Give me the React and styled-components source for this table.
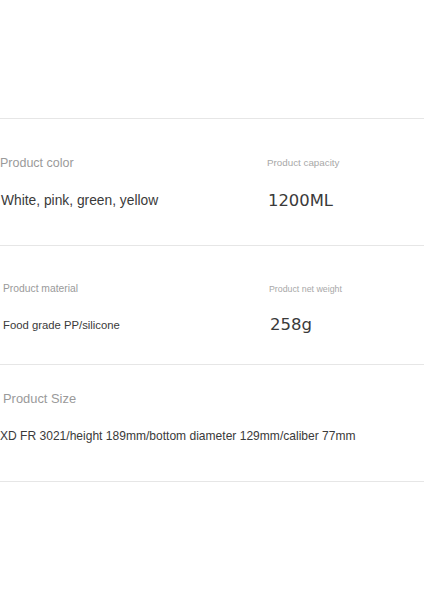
import React from "react";
import styled, { createGlobalStyle } from "styled-components";

const Global = createGlobalStyle`
  html, body { margin: 0; padding: 0; background: #fff; }
  body { font-family: "Liberation Sans", Arial, sans-serif; }
`;

const Page = styled.div`
  width: 424px;
  height: 600px;
  background: #fff;
  padding-top: 118px;
  box-sizing: border-box;
`;

const Section = styled.section`
  box-sizing: border-box;
  height: ${(p) => p.$h}px;
  border-top: 1px solid #e6e6e6;
  padding-top: ${(p) => p.$pt}px;
  display: grid;
  grid-template-columns: 267px 1fr;
  align-content: start;
  &:last-child { border-bottom: 1px solid #e6e6e6; }
`;

const Cell = styled.div`
  display: flex;
  flex-direction: column;
  gap: ${(p) => p.$gap}px;
  padding-left: ${(p) => p.$pl || 0}px;
  grid-column: ${(p) => (p.$wide ? "1 / -1" : "auto")};
`;

const Label = styled.div`
  height: 16px;
  line-height: 16px;
  font-size: ${(p) => p.$size}px;
  color: ${(p) => p.$color || "#9a9a9a"};
  white-space: nowrap;
  padding-left: ${(p) => p.$pl || 0}px;
`;

const Value = styled.div`
  height: 20px;
  line-height: 20px;
  font-size: ${(p) => p.$size}px;
  color: #3a3a3a;
  white-space: nowrap;
  padding-left: ${(p) => p.$pl || 0}px;
  font-family: ${(p) =>
    p.$num ? `"DejaVu Sans", "Noto Sans", sans-serif` : `"Liberation Sans", Arial, sans-serif`};
`;

export default function App() {
  return (
    <>
      <Global />
      <Page>
        <Section $h={127} $pt={36}>
          <Cell $gap={20}>
            <Label $size={12.5}>Product color</Label>
            <Value $size={13.8} $pl={1}>White, pink, green, yellow</Value>
          </Cell>
          <Cell $gap={20}>
            <Label $size={9.8} $color="#a8a8a8">Product capacity</Label>
            <Value $size={16.4} $num $pl={1}>1200ML</Value>
          </Cell>
        </Section>
        <Section $h={119} $pt={35}>
          <Cell $gap={18} $pl={3}>
            <Label $size={10.3}>Product material</Label>
            <Value $size={11.3}>Food grade PP/silicone</Value>
          </Cell>
          <Cell $gap={18} $pl={2}>
            <Label $size={8.8} $color="#a8a8a8">Product net weight</Label>
            <Value $size={16.5} $num $pl={1}>258g</Value>
          </Cell>
        </Section>
        <Section $h={118} $pt={26}>
          <Cell $gap={19} $wide>
            <Label $size={12.9} $pl={3}>Product Size</Label>
            <Value $size={12.06}>XD FR 3021/height 189mm/bottom diameter 129mm/caliber 77mm</Value>
          </Cell>
        </Section>
      </Page>
    </>
  );
}
